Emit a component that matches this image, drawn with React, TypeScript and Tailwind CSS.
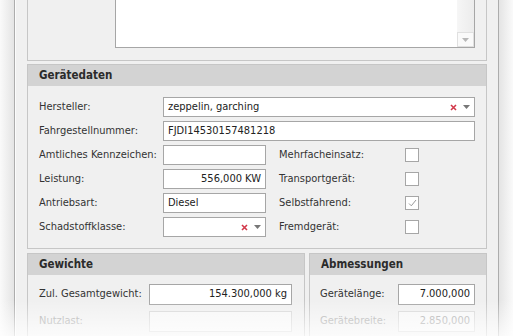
import React from 'react'

const font = { fontFamily: '"DejaVu Sans Condensed", "Liberation Sans", Arial, sans-serif' }

function Arrow({ className = '' }: { className?: string }) {
  return (
    <svg width="7" height="4" viewBox="0 0 7 4" className={className}>
      <path d="M0 0h7L3.5 4z" fill="currentColor" />
    </svg>
  )
}

function Clear() {
  return (
    <svg width="7" height="7" viewBox="0 0 7 7" className="text-[#d2384a]">
      <path d="M1 1l5 5M6 1L1 6" stroke="currentColor" strokeWidth="1.6" />
    </svg>
  )
}

function Input({
  value = '',
  right = false,
  disabled = false,
}: {
  value?: string
  right?: boolean
  disabled?: boolean
}) {
  return (
    <div
      className={`flex h-full items-center border px-[4px] text-[11px] ${
        disabled ? 'border-[#d6d6d6] bg-[#f7f7f7] text-[#a8a8a8]' : 'border-[#a6a6a6] bg-white text-[#222]'
      } ${right ? 'justify-end' : ''}`}
    >
      {value}
    </div>
  )
}

function Combo({ value = '' }: { value?: string }) {
  return (
    <div className="flex h-full items-center border border-[#a6a6a6] bg-white pl-[4px] pr-[4px] text-[11px] text-[#222]">
      <span className="flex-1">{value}</span>
      <Clear />
      <Arrow className="ml-[6px] text-[#777]" />
    </div>
  )
}

function Check({ checked = false }: { checked?: boolean }) {
  return (
    <div className="grid h-[14px] w-[14px] place-items-center border border-[#a6a6a6] bg-white">
      {checked && (
        <svg width="9" height="8" viewBox="0 0 9 8">
          <path d="M1 4.5l2.3 2.3L8 1" fill="none" stroke="#9a9a9a" strokeWidth="1" />
        </svg>
      )}
    </div>
  )
}

function Header({ title }: { title: string }) {
  return (
    <div className="flex h-[21px] items-center bg-[#d3d3d3] pl-[11px] text-[11.5px] font-bold text-[#2b2b2b]">
      {title}
    </div>
  )
}

export default function App() {
  return (
    <div style={font} className="relative flex h-[336px] w-[513px] overflow-hidden bg-white">
      {/* left frame */}
      <div className="w-[15px] shrink-0 border-r border-[#acacac] bg-gradient-to-r from-[#fafafa] to-[#e4e4e4]" />

      <div className="flex min-w-0 flex-1 flex-col gap-[3px] border-l border-[#fbfbfb] bg-[#f0f0f0] px-[11px]">
        {/* Beschreibung (cut off) */}
        <div className="h-[61px] shrink-0 border-x border-b border-[#c6c6c6] pl-[87px] pr-[11px]">
          <div className="flex h-[48px] border-x border-b border-[#a6a6a6] bg-white">
            <div className="flex-1" />
            <div className="flex w-[17px] flex-col justify-end bg-gradient-to-r from-[#f6f6f6] to-[#ececec]">
              <div className="grid h-[15px] place-items-center border border-[#e0e0e0] bg-[#fafafa]">
                <Arrow className="text-[#b8b8b8]" />
              </div>
            </div>
          </div>
        </div>

        {/* Gerätedaten */}
        <div className="shrink-0 border border-[#c6c6c6]">
          <Header title="Gerätedaten" />
          <div className="flex flex-col gap-[4px] p-[11px] text-[11px] text-[#333]">
            <div className="flex h-[20px] items-center">
              <span className="w-[124px]">Hersteller:</span>
              <div className="h-full flex-1">
                <Combo value="zeppelin, garching" />
              </div>
            </div>
            <div className="flex h-[20px] items-center">
              <span className="w-[124px]">Fahrgestellnummer:</span>
              <div className="h-full flex-1">
                <Input value="FJDI14530157481218" />
              </div>
            </div>
            {[
              { l: 'Amtliches Kennzeichen:', v: <Input />, r: 'Mehrfacheinsatz:', c: false },
              { l: 'Leistung:', v: <Input value="556,000 KW" right />, r: 'Transportgerät:', c: false },
              { l: 'Antriebsart:', v: <Input value="Diesel" />, r: 'Selbstfahrend:', c: true },
              { l: 'Schadstoffklasse:', v: <Combo />, r: 'Fremdgerät:', c: false },
            ].map((row) => (
              <div key={row.l} className="flex h-[20px] items-center">
                <span className="w-[124px]">{row.l}</span>
                <div className="h-full w-[103px]">{row.v}</div>
                <span className="ml-[13px] w-[126px]">{row.r}</span>
                <Check checked={row.c} />
              </div>
            ))}
          </div>
        </div>

        {/* Gewichte / Abmessungen */}
        <div className="mt-[1px] flex shrink-0 gap-[4px]">
          <div className="h-[100px] w-[278px] border border-[#c6c6c6]">
            <Header title="Gewichte" />
            <div className="flex flex-col gap-[6px] pl-[11px] pr-[12px] pt-[9px] text-[11px]">
              <div className="flex h-[21px] items-center">
                <span className="w-[110px] text-[#333]">Zul. Gesamtgewicht:</span>
                <div className="h-full flex-1">
                  <Input value="154.300,000 kg" right />
                </div>
              </div>
              <div className="flex h-[21px] items-center">
                <span className="w-[110px] text-[#a8a8a8]">Nutzlast:</span>
                <div className="h-full flex-1">
                  <Input disabled />
                </div>
              </div>
            </div>
          </div>
          <div className="h-[100px] flex-1 border border-[#c6c6c6]">
            <Header title="Abmessungen" />
            <div className="flex flex-col gap-[6px] pl-[10px] pr-[11px] pt-[9px] text-[11px]">
              <div className="flex h-[21px] items-center">
                <span className="w-[78px] text-[#333]">Gerätelänge:</span>
                <div className="h-full flex-1">
                  <Input value="7.000,000" right />
                </div>
              </div>
              <div className="flex h-[21px] items-center">
                <span className="w-[78px] text-[#a8a8a8]">Gerätebreite:</span>
                <div className="h-full flex-1">
                  <Input value="2.850,000" right disabled />
                </div>
              </div>
            </div>
          </div>
        </div>
      </div>

      {/* right frame */}
      <div className="w-[15px] shrink-0 border-l border-[#acacac] bg-gradient-to-r from-[#e4e4e4] to-[#fafafa]" />

      {/* bottom fade */}
      <div className="pointer-events-none absolute inset-x-0 bottom-0 h-[36px] bg-gradient-to-b from-white/0 to-white/75" />
    </div>
  )
}
